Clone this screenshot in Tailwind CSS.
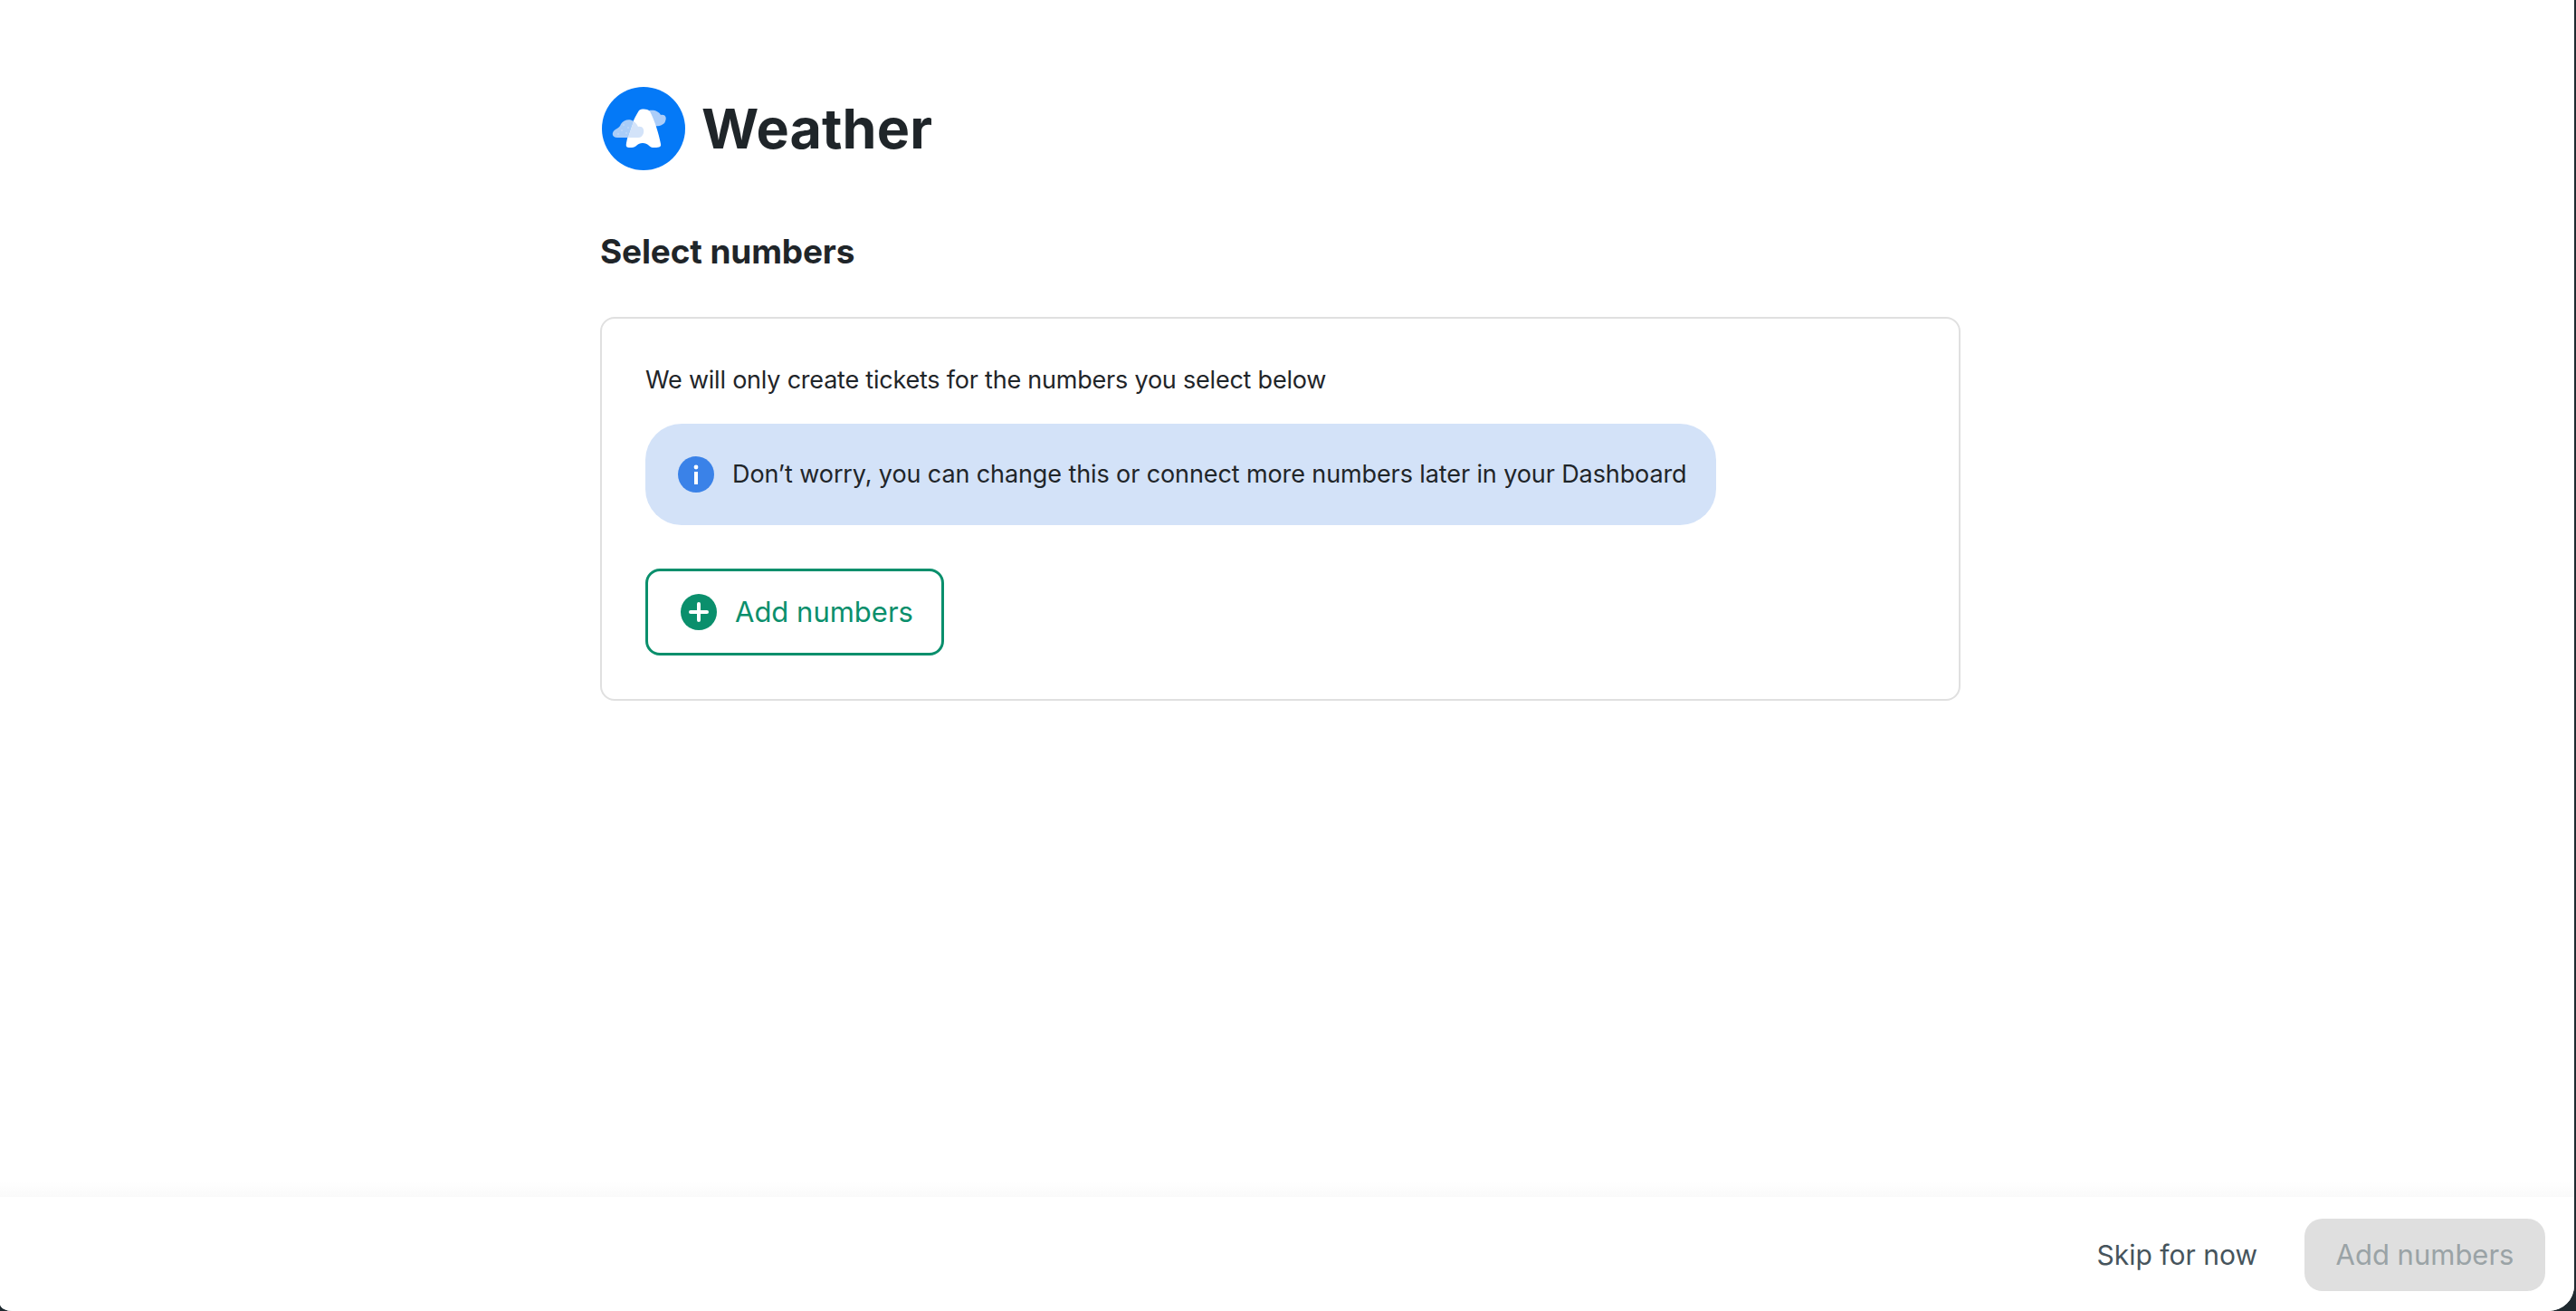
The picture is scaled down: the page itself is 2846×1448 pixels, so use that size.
<!DOCTYPE html>
<html lang="en">
<head>
  <meta charset="UTF-8">
  <title>Select numbers</title>
  <script src="https://cdn.jsdelivr.net/npm/@tailwindcss/browser@4"></script>
</head>
<body class="bg-[#1f2a30] h-screen overflow-hidden font-['Inter',sans-serif]">

  <div class="h-full w-[2844px] bg-white rounded-br-[28px] rounded-bl-[14px_8px] overflow-hidden flex flex-col">

    <main class="flex-1 pl-[663px] pt-[96px]">
      <!-- logo -->
      <div class="flex items-center gap-[18px] h-[92px] pl-[2px]">
        <svg class="w-[92px] h-[92px]" viewBox="0 0 92 92">
          <circle cx="46" cy="46" r="46" fill="#0479f7"/>
          <path d="M52 26 C58 25 63 27 65 31 C70 30 72 34 70 38 C69 42 63 44 57 43 Z" fill="#abcdf9"/>
          <path d="M41 26 C44 24 50 24 53 27 C58 36 63 52 65 63 C66 67 62 67 56 67 C53 67 51 62 45 62 C39 62 38 67 33 67 C28 67 26 67 27 62 C29 50 35 35 41 26 Z" fill="#ffffff"/>
          <path d="M35 38 C31 35 24 36 21 41 C20 44 18 45 15 47 C10 50 11 56 17 56 L29 56 Z" fill="#a9cdf8"/>
          <path d="M35 38 C38 40 39 42 40 44 C45 43 47 47 46 51 C45 54 43 56 40 56 L29 56 Z" fill="#d3e3f9"/>
          <g fill="#d3e3f9">
            <circle cx="24" cy="42" r="0.7"/>
            <circle cx="29" cy="45" r="0.7"/>
            <circle cx="22" cy="48" r="0.7"/>
            <circle cx="27" cy="51" r="0.7"/>
            <circle cx="18" cy="52" r="0.7"/>
          </g>
        </svg>
        <span class="text-[61px] leading-none font-bold text-[#1f2529] tracking-[0.002em]">Weather</span>
      </div>

      <h1 class="mt-[68px] text-[37px] leading-[44px] font-bold text-[#1f2529] tracking-[-0.004em]">Select numbers</h1>

      <!-- card -->
      <section class="mt-[50px] w-[1503px] h-[424px] border-2 border-[#e0e0e0] rounded-[16px] px-[48px] pt-[50px]">
        <p class="text-[27px] leading-[36px] text-[#1f2529] tracking-[-0.008em]">We will only create tickets for the numbers you select below</p>

        <div class="mt-[30px] w-[1183px] h-[112px] bg-[#d3e2f8] rounded-[40px] flex items-center pl-[36px] gap-[20px]">
          <svg class="w-[40px] h-[40px] shrink-0" viewBox="0 0 40 40">
            <circle cx="20" cy="20" r="20" fill="#3a82e8"/>
            <rect x="18" y="17" width="4" height="14" fill="#ffffff"/>
            <circle cx="20" cy="12" r="2.4" fill="#ffffff"/>
          </svg>
          <p class="text-[27px] leading-[36px] text-[#1f2529] tracking-[-0.004em]">Don’t worry, you can change this or connect more numbers later in your Dashboard</p>
        </div>

        <button class="mt-[48px] w-[330px] h-[96px] border-[3px] border-[#0a8f6c] rounded-[16px] flex items-center pl-[36px] gap-[20px] text-[31px] text-[#0a8f6c]">
          <svg class="w-[40px] h-[40px] shrink-0" viewBox="0 0 40 40">
            <circle cx="20" cy="20" r="20" fill="#0a8f6c"/>
            <path d="M20 11v18M11 20h18" stroke="#ffffff" stroke-width="4" stroke-linecap="round"/>
          </svg>
          Add numbers
        </button>
      </section>
    </main>

    <!-- footer -->
    <div class="h-[17px] bg-gradient-to-b from-white to-[#fafafa]"></div>
    <footer class="h-[126px] bg-white flex items-start justify-end pt-[24px] pr-[32px] gap-[52px]">
      <button class="h-[80px] text-[30px] text-[#46545c]">Skip for now</button>
      <button class="w-[266px] h-[80px] bg-[#dfdfdf] rounded-[20px] text-[31px] text-[#9aa3a6]">Add numbers</button>
    </footer>
  </div>

</body>
</html>
